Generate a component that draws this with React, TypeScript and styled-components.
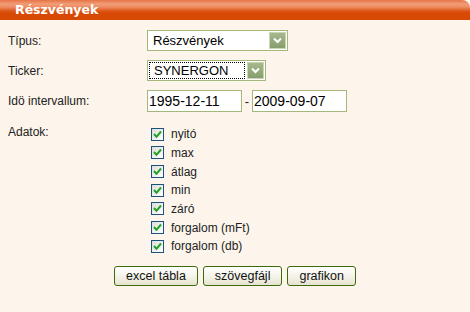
import React from "react";
import styled, { createGlobalStyle } from "styled-components";

const Global = createGlobalStyle`
  html, body { margin: 0; padding: 0; background: #fdf5ec; }
  body { font-family: "Liberation Sans", Arial, sans-serif; color: #222; }
`;

const Page = styled.div`
  width: 470px;
  height: 312px;
  background: #fdf5ec;
  overflow: hidden;
`;

const Header = styled.div`
  height: 20px;
  line-height: 20px;
  padding-left: 15px;
  border-top-right-radius: 8px;
  background: linear-gradient(
    #e67448 0px,
    #f19d77 4px,
    #ee8d62 7px,
    #dc5617 11px,
    #d84a04 13px,
    #d84a04 100%
  );
  color: #fff;
  font-family: "DejaVu Sans", Verdana, sans-serif;
  font-weight: bold;
  font-size: 12.5px;
`;

const Form = styled.div`
  display: grid;
  grid-template-columns: 139px 1fr;
  padding: 10px 0 0 8px;
  row-gap: 9px;
  align-items: center;
`;

const Label = styled.div<{ $top?: boolean }>`
  font-size: 12px;
  color: #222;
  align-self: ${(p) => (p.$top ? "start" : "center")};
  ${(p) => (p.$top ? "margin-top: 4px;" : "")}
`;

const SelectBox = styled.div<{ $w: number }>`
  width: ${(p) => p.$w}px;
  height: 21px;
  box-sizing: border-box;
  border: 1px solid #a4b87c;
  background: #fff;
  display: flex;
  align-items: stretch;
  padding: 1px;
`;

const SelectText = styled.div<{ $focus?: boolean }>`
  flex: 1;
  font-size: 13px;
  line-height: 17px;
  padding-left: ${(p) => (p.$focus ? "5px" : "4px")};
  color: #000;
  ${(p) => (p.$focus ? "outline: 1px dotted #000; outline-offset: -1px; margin-right: 2px;" : "")}
`;

const Arrow = styled.div`
  width: 17px;
  height: 17px;
  box-sizing: border-box;
  border: 1px solid #c9d6b4;
  background: linear-gradient(#a6b98e, #869e6c);
  display: flex;
  align-items: center;
  justify-content: center;
`;

const DateRow = styled.div`
  display: flex;
  align-items: center;
`;

const DateInput = styled.div`
  width: 95px;
  height: 22px;
  box-sizing: border-box;
  border: 1px solid #a4b87c;
  background: #fff;
  font-size: 14px;
  line-height: 20px;
  padding-left: 1px;
  color: #000;
`;

const Dash = styled.span`
  font-size: 13px;
  width: 10px;
  text-align: center;
`;

const CheckList = styled.div`
  display: flex;
  flex-direction: column;
  padding-left: 4px;
  margin-top: 4px;
`;

const CheckRow = styled.div`
  height: 18.67px;
  display: flex;
  align-items: center;
  gap: 7px;
  font-size: 12px;
  color: #222;
`;

const Box = styled.span`
  width: 13px;
  height: 13px;
  box-sizing: border-box;
  border: 1px solid #1c5180;
  background: linear-gradient(135deg, #dcdcd7, #ffffff);
  display: flex;
  align-items: center;
  justify-content: center;
`;

const Buttons = styled.div`
  display: flex;
  justify-content: center;
  gap: 5px;
  margin-top: 10px;
`;

const Button = styled.button`
  height: 20px;
  box-sizing: border-box;
  border: 1px solid #3c6b0c;
  border-radius: 3px;
  background: linear-gradient(#ffffff, #f3f1e6 60%, #e6e2cf);
  font-family: "Liberation Sans", Arial, sans-serif;
  font-size: 12.5px;
  color: #111;
  padding: 0 11px;
  line-height: 18px;
`;

const Chevron = () => (
  <svg width="9" height="7" viewBox="0 0 9 7">
    <path d="M1 1.5 L4.5 5 L8 1.5" stroke="#fff" strokeWidth="2" fill="none" />
  </svg>
);

const Check = () => (
  <svg width="9" height="9" viewBox="0 0 9 9">
    <path d="M1 4 L3.5 6.8 L8 1.5" stroke="#21a121" strokeWidth="2" fill="none" />
  </svg>
);

const items = ["nyitó", "max", "átlag", "min", "záró", "forgalom (mFt)", "forgalom (db)"];

export default function App() {
  return (
    <Page>
      <Global />
      <Header>Részvények</Header>
      <Form>
        <Label>Típus:</Label>
        <SelectBox $w={141}>
          <SelectText>Részvények</SelectText>
          <Arrow>
            <Chevron />
          </Arrow>
        </SelectBox>
        <Label>Ticker:</Label>
        <SelectBox $w={119}>
          <SelectText $focus>SYNERGON</SelectText>
          <Arrow>
            <Chevron />
          </Arrow>
        </SelectBox>
        <Label>Idö intervallum:</Label>
        <DateRow>
          <DateInput>1995-12-11</DateInput>
          <Dash>-</Dash>
          <DateInput>2009-09-07</DateInput>
        </DateRow>
        <Label $top>Adatok:</Label>
        <CheckList>
          {items.map((it) => (
            <CheckRow key={it}>
              <Box>
                <Check />
              </Box>
              {it}
            </CheckRow>
          ))}
        </CheckList>
      </Form>
      <Buttons>
        <Button>excel tábla</Button>
        <Button>szövegfájl</Button>
        <Button>grafikon</Button>
      </Buttons>
    </Page>
  );
}
